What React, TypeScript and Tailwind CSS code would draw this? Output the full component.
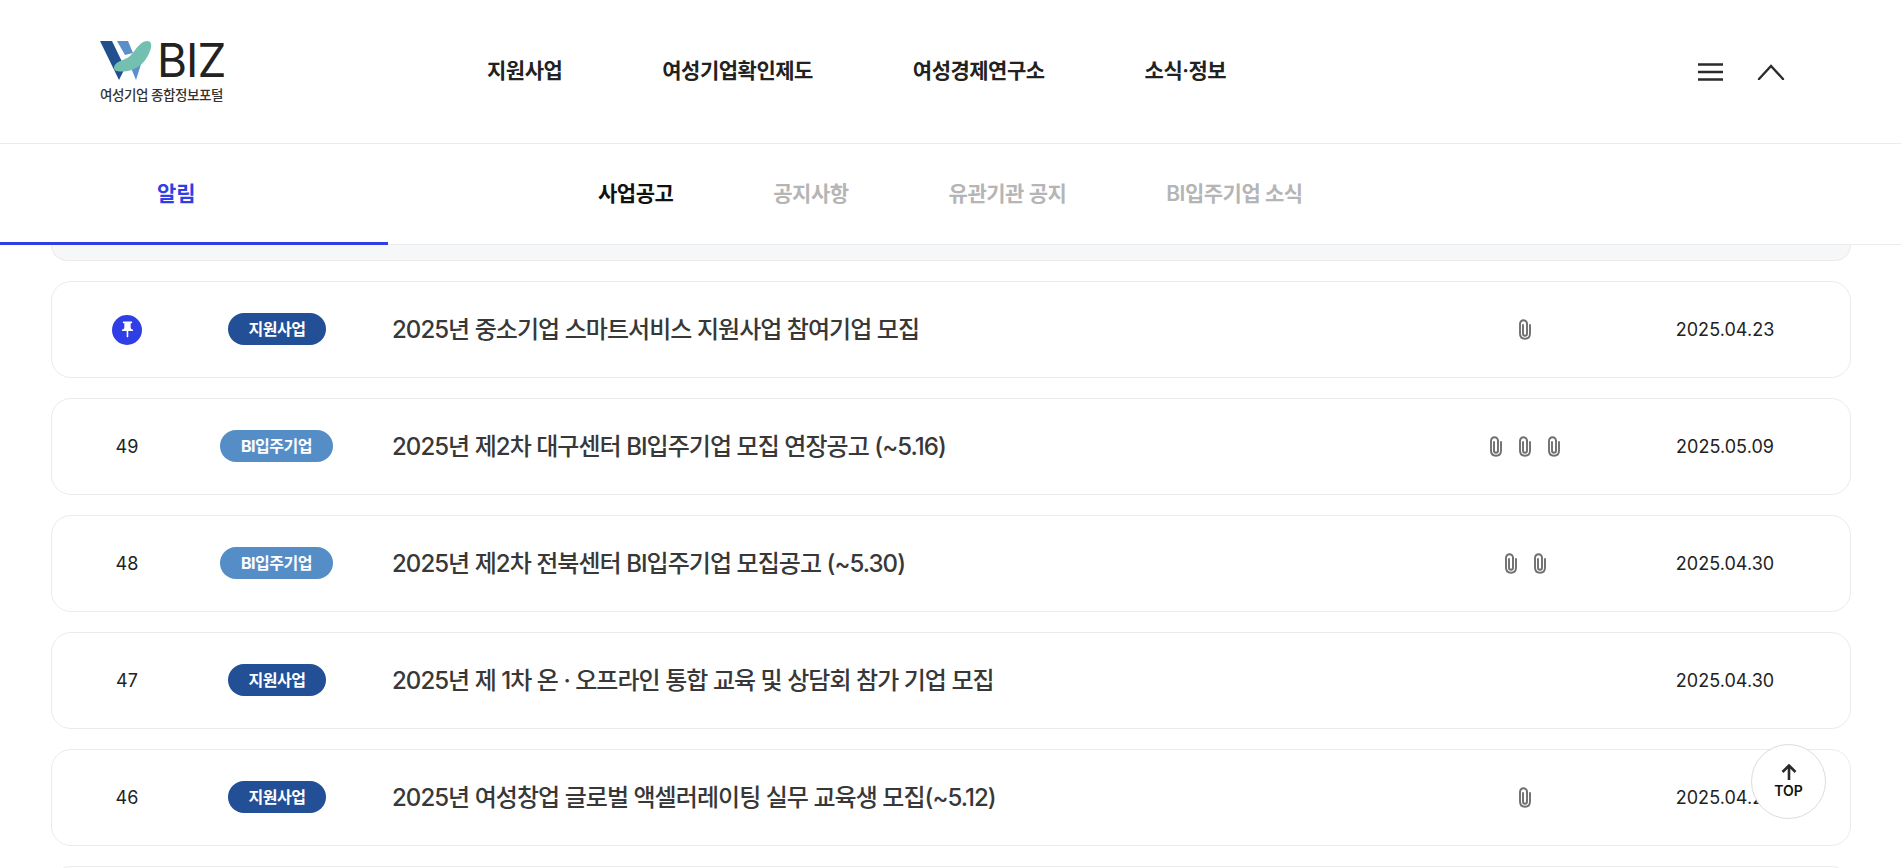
import { MdPushPin } from 'react-icons/md';

const NAV = ['지원사업', '여성기업확인제도', '여성경제연구소', '소식·정보'];
const TABS = ['사업공고', '공지사항', '유관기관 공지', 'BI입주기업 소식'];

type Row = { no: number | null; tag: string; title: string; files: number; date: string };

const ROWS: Row[] = [
  { no: null, tag: '지원사업', title: '2025년 중소기업 스마트서비스 지원사업 참여기업 모집', files: 1, date: '2025.04.23' },
  { no: 49, tag: 'BI입주기업', title: '2025년 제2차 대구센터 BI입주기업 모집 연장공고 (~5.16)', files: 3, date: '2025.05.09' },
  { no: 48, tag: 'BI입주기업', title: '2025년 제2차 전북센터 BI입주기업 모집공고 (~5.30)', files: 2, date: '2025.04.30' },
  { no: 47, tag: '지원사업', title: '2025년 제 1차 온 · 오프라인 통합 교육 및 상담회 참가 기업 모집', files: 0, date: '2025.04.30' },
  { no: 46, tag: '지원사업', title: '2025년 여성창업 글로벌 액셀러레이팅 실무 교육생 모집(~5.12)', files: 1, date: '2025.04.23' },
];

function Logo() {
  return (
    <div className="w-[126px]">
      <div className="flex items-center h-[39px]">
        <svg width="52" height="39" viewBox="0 0 52 39" className="shrink-0">
          <path d="M0 0H12L25 27L19 39Z" fill="#21508f" />
          <path d="M17 0H28L33 12L25 14Z" fill="#5a8fc9" />
          <path d="M29 22L42 20L36 39Z" fill="#5a8fc9" />
          <path d="M14 27C14 20 24 20 30 15C36 9 40 0 47 0C52 0 52 5 50 10C46 21 38 28 28 30C20 31 14 31 14 27Z" fill="#74c0b0" />
        </svg>
        <span className="ml-[5px] text-[46px] leading-none text-[#222] font-['Inter',sans-serif] tracking-[-1px]">BIZ</span>
      </div>
      <div className="mt-[7px] text-[13.5px] leading-[16px] font-medium text-[#333] whitespace-nowrap tracking-[-0.45px]">여성기업 종합정보포털</div>
    </div>
  );
}

function Clip() {
  return (
    <svg width="14" height="21" viewBox="0 0 14 21" fill="none" stroke="#6f6f6f" strokeWidth="1.9" strokeLinecap="round">
      <path d="M5 6V14.5C5 16 5.8 16.8 7 16.8C8.2 16.8 9 16 9 14.5V5" />
      <path d="M12 6V14.5C12 17.8 10 19.8 7 19.8C4 19.8 2 17.8 2 14.5V5C2 2.8 3.6 1.2 5.5 1.2C7.4 1.2 9 2.8 9 5" />
    </svg>
  );
}

function Card({ row }: { row: Row }) {
  const isBi = row.tag !== '지원사업';
  return (
    <div className="flex items-center h-[97px] rounded-[20px] border border-[#ebebeb] bg-white">
      <div className="w-[150px] flex justify-center text-[18px] text-[#222] font-['Inter',sans-serif]">
        {row.no ?? (
          <span className="w-[30px] h-[30px] rounded-full bg-[#2f3fe5] flex items-center justify-center">
            <MdPushPin className="text-white" size={19} />
          </span>
        )}
      </div>
      <div className="w-[150px] flex justify-center">
        <span className={`h-[32px] -mt-[2px] flex items-center justify-center rounded-full text-white text-[16px] font-bold tracking-[-0.5px] ${isBi ? 'w-[113px] -ml-[1px] bg-[#558dc7]' : 'w-[98px] bg-[#224f95]'}`}>
          {row.tag}
        </span>
      </div>
      <div className="ml-[40px] flex-1 text-[24px] leading-[32px] text-[#383838] font-medium tracking-[-0.95px] whitespace-nowrap">{row.title}</div>
      <div className="w-[200px] flex justify-center gap-[15px]">
        {Array.from({ length: row.files }, (_, i) => <Clip key={i} />)}
      </div>
      <div className="w-[200px] mr-[25px] text-center text-[18px] text-[#222] tracking-[0.05px] font-['Inter',sans-serif]">{row.date}</div>
    </div>
  );
}

export default function App() {
  return (
    <div className="relative h-[868px] overflow-hidden bg-white font-['Inter','Noto_Sans_CJK_KR',sans-serif]">
      <header className="h-[144px] border-b border-[#ebebeb] flex items-center pl-[100px] pr-[116px]">
        <Logo />
        <nav className="ml-[261px] mb-[2px] flex gap-[100px]">
          {NAV.map(n => (
            <a key={n} className="text-[21px] font-semibold text-[#222] tracking-[-0.5px] whitespace-nowrap">{n}</a>
          ))}
        </nav>
        <div className="ml-auto flex items-center gap-[34px]">
          <svg width="25" height="20" viewBox="0 0 25 20" stroke="#2b2b2b" strokeWidth="2.4">
            <path d="M0 2.5H25M0 10H25M0 17.5H25" />
          </svg>
          <svg width="28" height="16" viewBox="0 0 28 16" fill="none" stroke="#2b2b2b" strokeWidth="2.4" strokeLinecap="round">
            <path d="M2 15L14 2L26 15" />
          </svg>
        </div>
      </header>

      <div className="relative z-10 h-[101px] flex border-b border-[#ebebeb] bg-white">
        <div className="w-[388px] h-[101px] border-b-[3px] border-[#2f3fe5] flex items-center pl-[157px] pt-[2px] text-[21px] font-semibold text-[#2f3fe5]">알림</div>
        <div className="ml-[210px] flex items-center gap-[100px] pb-[1px]">
          {TABS.map((t, i) => (
            <span key={t} className={`text-[21px] font-semibold tracking-[-0.5px] whitespace-nowrap ${i === 0 ? 'text-[#111]' : 'text-[#b5b5b5]'}`}>{t}</span>
          ))}
        </div>
      </div>

      <main className="pl-[51px] pr-[50px] flex flex-col gap-[20px]">
        <div className="h-[16px] bg-[#f6f7f9] border border-t-0 border-[#ebebeb] rounded-b-[20px]" />
        {ROWS.map(r => <Card key={r.title} row={r} />)}
        <div className="h-[97px] rounded-[20px] border border-[#ebebeb] bg-white" />
      </main>

      <button className="absolute left-[1751px] top-[744px] w-[75px] h-[75px] rounded-full border border-[#dcdcdc] bg-white flex flex-col items-center justify-center">
        <svg width="18" height="16" viewBox="0 0 18 16" fill="none" stroke="#2b2b2b" strokeWidth="2.6">
          <path d="M9 16V2M2.5 8L9 1.5L15.5 8" />
        </svg>
        <span className="mt-[3px] text-[14px] leading-[16px] font-semibold text-[#111]">TOP</span>
      </button>
    </div>
  );
}
